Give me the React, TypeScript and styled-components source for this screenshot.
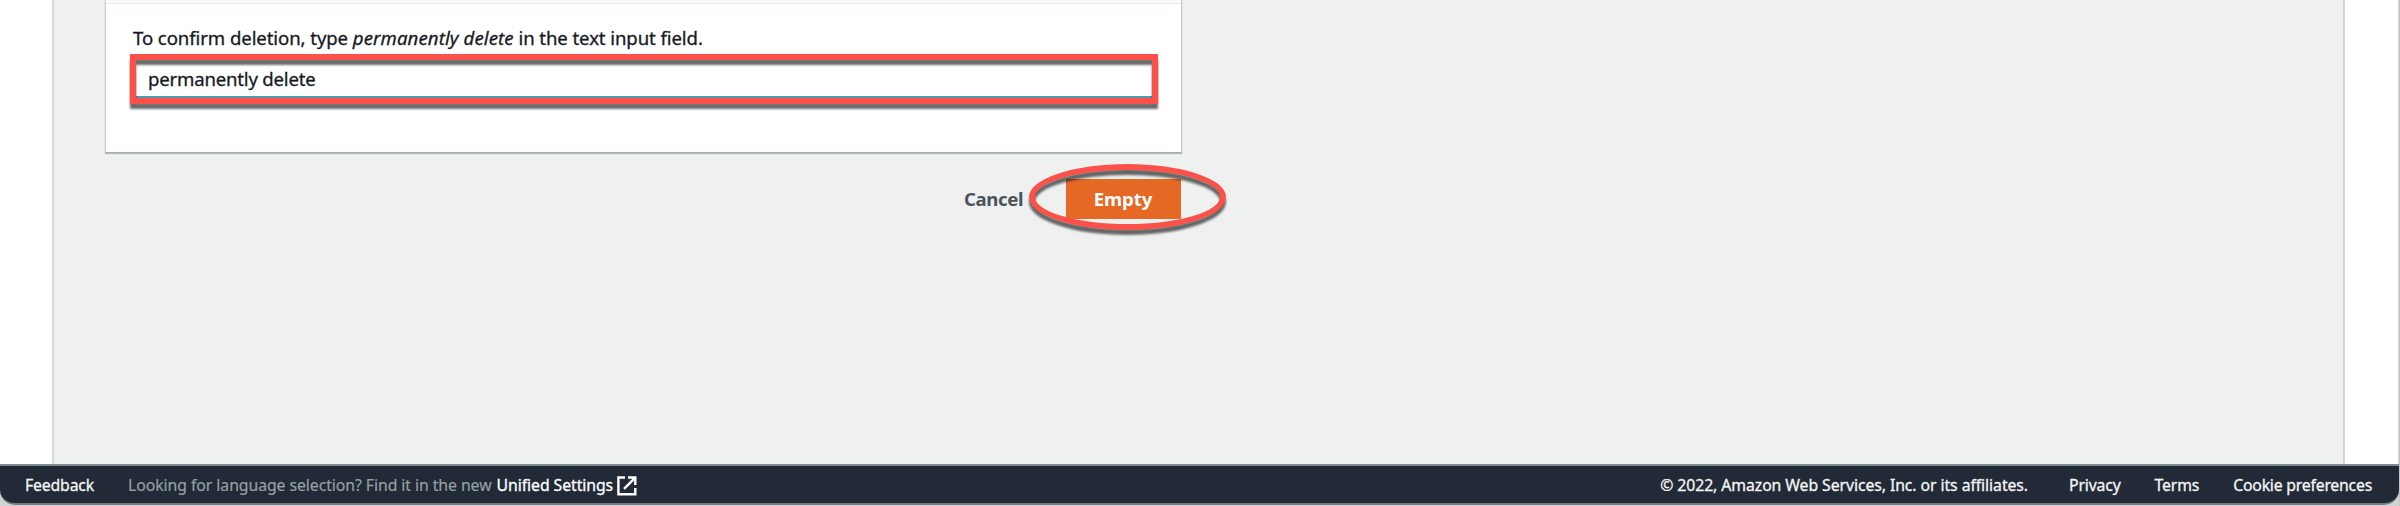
import React from 'react';
import styled, { createGlobalStyle } from 'styled-components';

const GlobalStyle = createGlobalStyle`
  * { box-sizing: border-box; }
  body {
    margin: 0;
    background: #d0d2d3;
    font-family: "Noto Sans", "Open Sans", sans-serif;
    overflow: hidden;
  }
`;

const Window = styled.div`
  display: flex;
  flex-direction: column;
  width: 2400px;
  height: 506px;
  border-right: 1px solid #c4c6c7;
`;

const Page = styled.div`
  display: flex;
  height: 464px;
  padding: 0 53px 0 52px;
  background: #fff;
  border-right: 1px solid #d3d5d5;
`;

const Main = styled.main`
  flex: 1;
  padding-left: 51px;
  background: #eff1f1;
  border-left: 2px solid #d5dbdb;
  border-right: 2px solid #cfd5d5;
`;

const Form = styled.form`
  width: 1077px;
`;

const Card = styled.section`
  height: 153px;
  background: #fff;
  border-left: 1px solid #c8cfd0;
  border-right: 1px solid #c3cacb;
  border-bottom: 1px solid #a4aeb0;
  box-shadow: 0 1px 1px rgba(0, 28, 36, 0.25);
`;

const CardHeader = styled.div`
  height: 4px;
  background: #f9fafa;
  border-bottom: 1px solid #e8ebeb;
`;

const CardBody = styled.div`
  padding: 20px 25px 0 27px;
`;

const FieldLabel = styled.label`
  display: block;
  height: 30px;
  line-height: 28px;
  font-size: 18.6px;
  letter-spacing: -0.09px;
  color: #16191f;
  -webkit-text-stroke: 0.3px currentColor;
  white-space: pre;

  em { letter-spacing: 0.1px; }
`;

const FieldFrame = styled.div`
  position: relative;
  width: 1024px;
  height: 50px;
`;

const TextInput = styled.input`
  display: block;
  width: 100%;
  height: 44px;
  padding: 6px 15px 0;
  border: 0;
  border-bottom: 2px solid #4d9bb3;
  outline: 0;
  background: #fff;
  font-family: inherit;
  font-size: 18.6px;
  letter-spacing: -0.2px;
  color: #16191f;
  -webkit-text-stroke: 0.3px currentColor;
`;

const Highlight = styled.span<{ $oval?: boolean }>`
  position: absolute;
  inset: ${(p) => (p.$oval ? '-15px -45px -11px -37px' : '0 -1px 0 -3px')};
  border: 6px solid #fc5148;
  border-radius: ${(p) => (p.$oval ? '50%' : '0')};
  filter: drop-shadow(0 5.5px 1.2px rgba(0, 0, 0, 0.58));
  pointer-events: none;
`;

const Actions = styled.div`
  display: flex;
  justify-content: flex-end;
  align-items: center;
  padding: 26px 1px 0 0;
`;

const ActionButton = styled.button<{ $primary?: boolean }>`
  position: relative;
  width: ${(p) => (p.$primary ? '115px' : '144px')};
  height: 40px;
  padding: ${(p) => (p.$primary ? '0 1px 0 0' : '0 42px')};
  border: 0;
  border-radius: 1px;
  background: ${(p) => (p.$primary ? '#e56825' : 'transparent')};
  color: ${(p) => (p.$primary ? '#fff' : '#4b535c')};
  font-family: inherit;
  font-size: 18.6px;
  font-weight: 700;
  line-height: 38px;
  letter-spacing: ${(p) => (p.$primary ? '-0.05px' : '-0.35px')};
  text-align: ${(p) => (p.$primary ? 'center' : 'left')};
`;

const Footer = styled.footer`
  display: flex;
  align-items: center;
  height: 41px;
  padding: 2px 27px 0 25px;
  border-top: 2px solid #7f8b91;
  border-bottom: 2px solid #777c80;
  border-radius: 0 0 15px 15px;
  background: #212a36;
  color: #f4f5f5;
  font-size: 15.8px;
  letter-spacing: -0.16px;
  line-height: 35px;
  white-space: nowrap;
`;

const FooterLink = styled.a`
  color: inherit;
  -webkit-text-stroke: 0.3px currentColor;
`;

const LanguageHint = styled.div`
  display: flex;
  align-items: center;
  gap: 5px;
  margin-left: 34px;
  color: #95a0a2;
  letter-spacing: -0.07px;
  -webkit-text-stroke: 0.2px currentColor;
`;

const SettingsLink = styled(FooterLink)`
  display: flex;
  align-items: center;
  gap: 4px;
  color: #fff;
`;

const Legal = styled.div`
  display: flex;
  margin-left: auto;
`;

const Copyright = styled.span`
  margin-right: 41px;
  letter-spacing: -0.08px;
  -webkit-text-stroke: 0.3px currentColor;
`;

const LegalLinks = styled.nav`
  display: flex;
  gap: 34px;
`;

const CookieLink = styled(FooterLink)`
  letter-spacing: -0.22px;
`;

const ExternalIcon = () => (
  <svg width="20" height="20" viewBox="0 0 20 20" fill="none" stroke="#fff" strokeWidth="2.4">
    <path d="M8 1.5H1.4V18.2H18.3V12M11 1.5H18.3V9M18 1.8L7 12.8" />
  </svg>
);

export default function App() {
  return (
    <Window>
      <GlobalStyle />
      <Page>
        <Main>
          <Form>
            <Card>
              <CardHeader />
              <CardBody>
                <FieldLabel htmlFor="confirm">
                  To confirm deletion, type <em>permanently delete</em> in the text input field.
                </FieldLabel>
                <FieldFrame>
                  <TextInput id="confirm" defaultValue="permanently delete" />
                  <Highlight />
                </FieldFrame>
              </CardBody>
            </Card>
            <Actions>
              <ActionButton type="button">Cancel</ActionButton>
              <ActionButton type="button" $primary>
                Empty
                <Highlight $oval />
              </ActionButton>
            </Actions>
          </Form>
        </Main>
      </Page>
      <Footer>
        <FooterLink>Feedback</FooterLink>
        <LanguageHint>
          <span>Looking for language selection? Find it in the new</span>
          <SettingsLink>
            Unified Settings
            <ExternalIcon />
          </SettingsLink>
        </LanguageHint>
        <Legal>
          <Copyright>© 2022, Amazon Web Services, Inc. or its affiliates.</Copyright>
          <LegalLinks>
            <FooterLink>Privacy</FooterLink>
            <FooterLink>Terms</FooterLink>
            <CookieLink>Cookie preferences</CookieLink>
          </LegalLinks>
        </Legal>
      </Footer>
    </Window>
  );
}
